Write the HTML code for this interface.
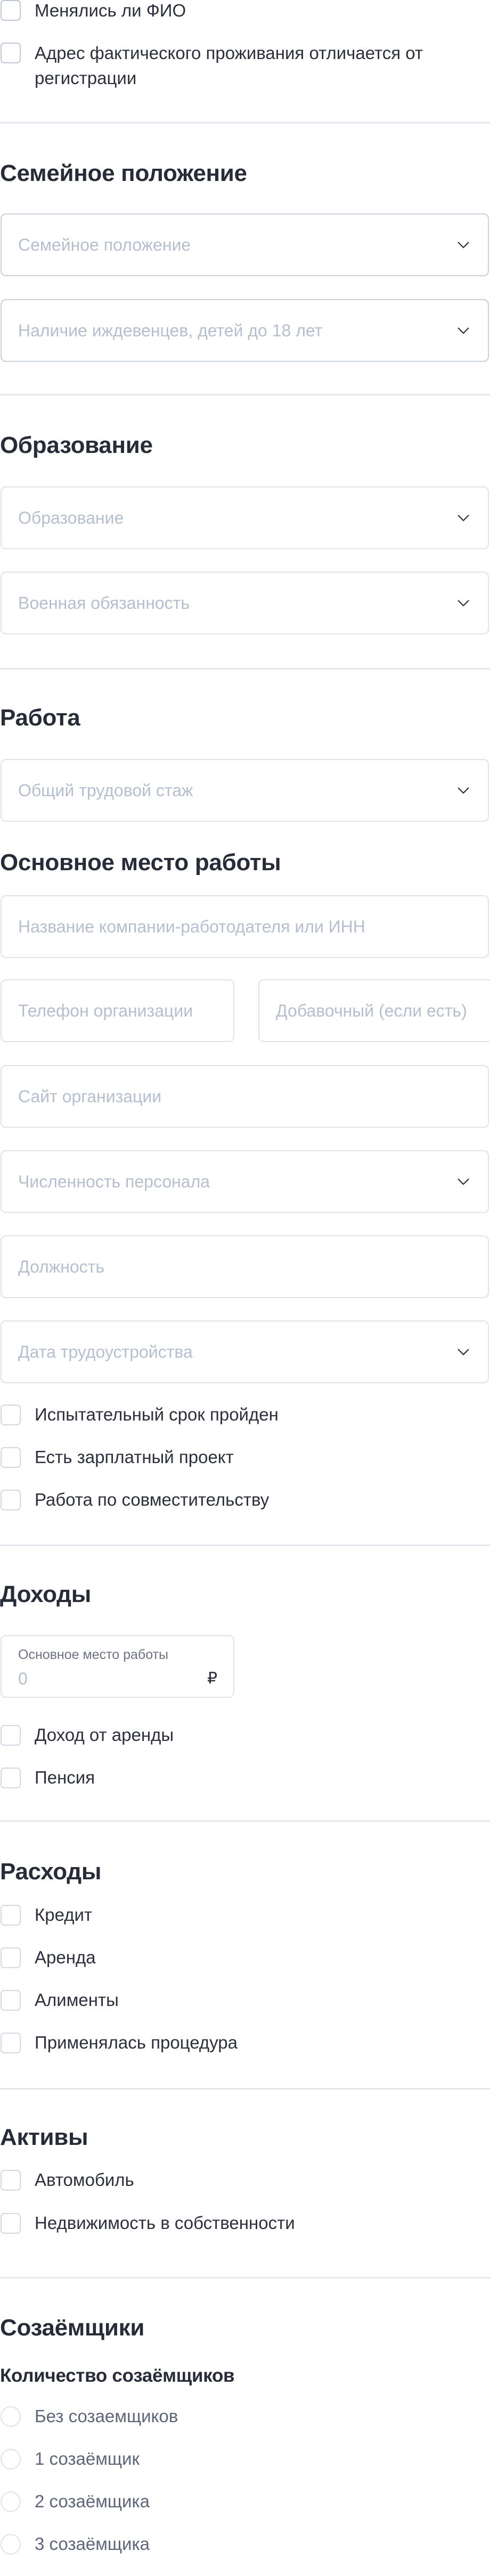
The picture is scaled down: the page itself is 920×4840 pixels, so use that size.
<!DOCTYPE html>
<html><head><meta charset="utf-8"><style>
*{margin:0;padding:0;box-sizing:border-box}
body{width:920px;height:4840px;background:#fff;position:relative;overflow:hidden;font-family:"Liberation Sans","Noto Sans CJK SC",sans-serif;color:#2b303c}
.a{position:absolute}
.h{position:absolute;left:0;font-weight:bold;font-size:44px;line-height:56px;height:56px;color:#272c38;white-space:nowrap;letter-spacing:-0.3px}
.dv{position:absolute;left:0;width:920px;height:3px;background:#e3e7ee}
.f{position:absolute;left:1px;width:917px;height:118px;border:2px solid #dfe3ec;border-radius:10px;background:#fff}
.f.b{border-color:#c9d0de}
.f span{position:absolute;left:31px;top:0;line-height:114px;font-size:32px;color:#b6bfcf;white-space:nowrap}
.f svg{position:absolute;right:34px;top:50px}
.cb{position:absolute;left:1px;width:38px;height:39px;border:2px solid #d3d9e4;border-radius:7px}
.cb.b{border-color:#bfc7d6}
.t{position:absolute;left:65px;font-size:33px;line-height:46px;height:46px;color:#2b303c;white-space:nowrap}
.rd{position:absolute;left:1px;width:38px;height:39px;border:2px solid #dde2ec;border-radius:50%}
.rt{position:absolute;left:65px;font-size:33px;line-height:46px;color:#5d6779;white-space:nowrap}
</style></head><body>

<div class="cb b" style="top:0"></div><div class="t" style="top:-3px">Менялись ли ФИО</div>
<div class="cb b" style="top:80px"></div><div class="t" style="top:77px">Адрес фактического проживания отличается от</div>
<div class="t" style="top:124px">регистрации</div>

<div class="dv" style="top:229px"></div>
<div class="h" style="top:298px">Семейное положение</div>
<div class="f b" style="top:401px"><span>Семейное положение</span><svg width="24" height="14" viewBox="0 0 24 14"><path d="M2 2l10 10 10-10" fill="none" stroke="#2b303c" stroke-width="2.2"/></svg></div>
<div class="f b" style="top:562px"><span>Наличие иждевенцев, детей до 18 лет</span><svg width="24" height="14" viewBox="0 0 24 14"><path d="M2 2l10 10 10-10" fill="none" stroke="#2b303c" stroke-width="2.2"/></svg></div>

<div class="dv" style="top:740px"></div>
<div class="h" style="top:809px">Образование</div>
<div class="f" style="top:914px"><span>Образование</span><svg width="24" height="14" viewBox="0 0 24 14"><path d="M2 2l10 10 10-10" fill="none" stroke="#2b303c" stroke-width="2.2"/></svg></div>
<div class="f" style="top:1074px"><span>Военная обязанность</span><svg width="24" height="14" viewBox="0 0 24 14"><path d="M2 2l10 10 10-10" fill="none" stroke="#2b303c" stroke-width="2.2"/></svg></div>

<div class="dv" style="top:1255px"></div>
<div class="h" style="top:1321px">Работа</div>
<div class="f" style="top:1426px"><span>Общий трудовой стаж</span><svg width="24" height="14" viewBox="0 0 24 14"><path d="M2 2l10 10 10-10" fill="none" stroke="#2b303c" stroke-width="2.2"/></svg></div>

<div class="h" style="top:1593px">Основное место работы</div>
<div class="f" style="top:1682px"><span>Название компании-работодателя или ИНН</span></div>
<div class="f" style="top:1840px;width:439px"><span>Телефон организации</span></div>
<div class="f" style="top:1840px;left:485px;width:460px"><span>Добавочный (если есть)</span></div>
<div class="f" style="top:2001px"><span>Сайт организации</span></div>
<div class="f" style="top:2161px"><span>Численность персонала</span><svg width="24" height="14" viewBox="0 0 24 14"><path d="M2 2l10 10 10-10" fill="none" stroke="#2b303c" stroke-width="2.2"/></svg></div>
<div class="f" style="top:2321px"><span>Должность</span></div>
<div class="f" style="top:2481px"><span>Дата трудоустройства</span><svg width="24" height="14" viewBox="0 0 24 14"><path d="M2 2l10 10 10-10" fill="none" stroke="#2b303c" stroke-width="2.2"/></svg></div>

<div class="cb" style="top:2639px"></div><div class="t" style="top:2635px">Испытательный срок пройден</div>
<div class="cb" style="top:2719px"></div><div class="t" style="top:2715px">Есть зарплатный проект</div>
<div class="cb" style="top:2799px"></div><div class="t" style="top:2795px">Работа по совместительству</div>

<div class="dv" style="top:2902px"></div>
<div class="h" style="top:2968px">Доходы</div>
<div class="f" style="top:3072px;width:439px">
  <div class="a" style="left:31px;top:18px;font-size:25px;line-height:34px;color:#6b7385;white-space:nowrap">Основное место работы</div>
  <div class="a" style="left:31px;top:60px;font-size:32px;line-height:40px;color:#b6bfcf">0</div>
  <div class="a" style="left:386px;top:60px;font-size:30px;line-height:40px;color:#2b303c">₽</div>
</div>
<div class="cb" style="top:3241px"></div><div class="t" style="top:3237px">Доход от аренды</div>
<div class="cb" style="top:3321px"></div><div class="t" style="top:3317px">Пенсия</div>

<div class="dv" style="top:3420px"></div>
<div class="h" style="top:3489px">Расходы</div>
<div class="cb" style="top:3579px"></div><div class="t" style="top:3575px">Кредит</div>
<div class="cb" style="top:3659px"></div><div class="t" style="top:3655px">Аренда</div>
<div class="cb" style="top:3739px"></div><div class="t" style="top:3735px">Алименты</div>
<div class="cb" style="top:3819px"></div><div class="t" style="top:3815px">Применялась процедура</div>

<div class="dv" style="top:3923px"></div>
<div class="h" style="top:3988px">Активы</div>
<div class="cb" style="top:4077px"></div><div class="t" style="top:4073px">Автомобиль</div>
<div class="cb" style="top:4158px"></div><div class="t" style="top:4154px">Недвижимость в собственности</div>

<div class="dv" style="top:4278px"></div>
<div class="h" style="top:4346px">Созаёмщики</div>
<div class="h" style="top:4441px;font-size:35px;line-height:46px">Количество созаёмщиков</div>
<div class="rd" style="top:4521px"></div><div class="rt" style="top:4517px">Без созаемщиков</div>
<div class="rd" style="top:4601px"></div><div class="rt" style="top:4597px">1 созаёмщик</div>
<div class="rd" style="top:4681px"></div><div class="rt" style="top:4677px">2 созаёмщика</div>
<div class="rd" style="top:4761px"></div><div class="rt" style="top:4757px">3 созаёмщика</div>

</body></html>
